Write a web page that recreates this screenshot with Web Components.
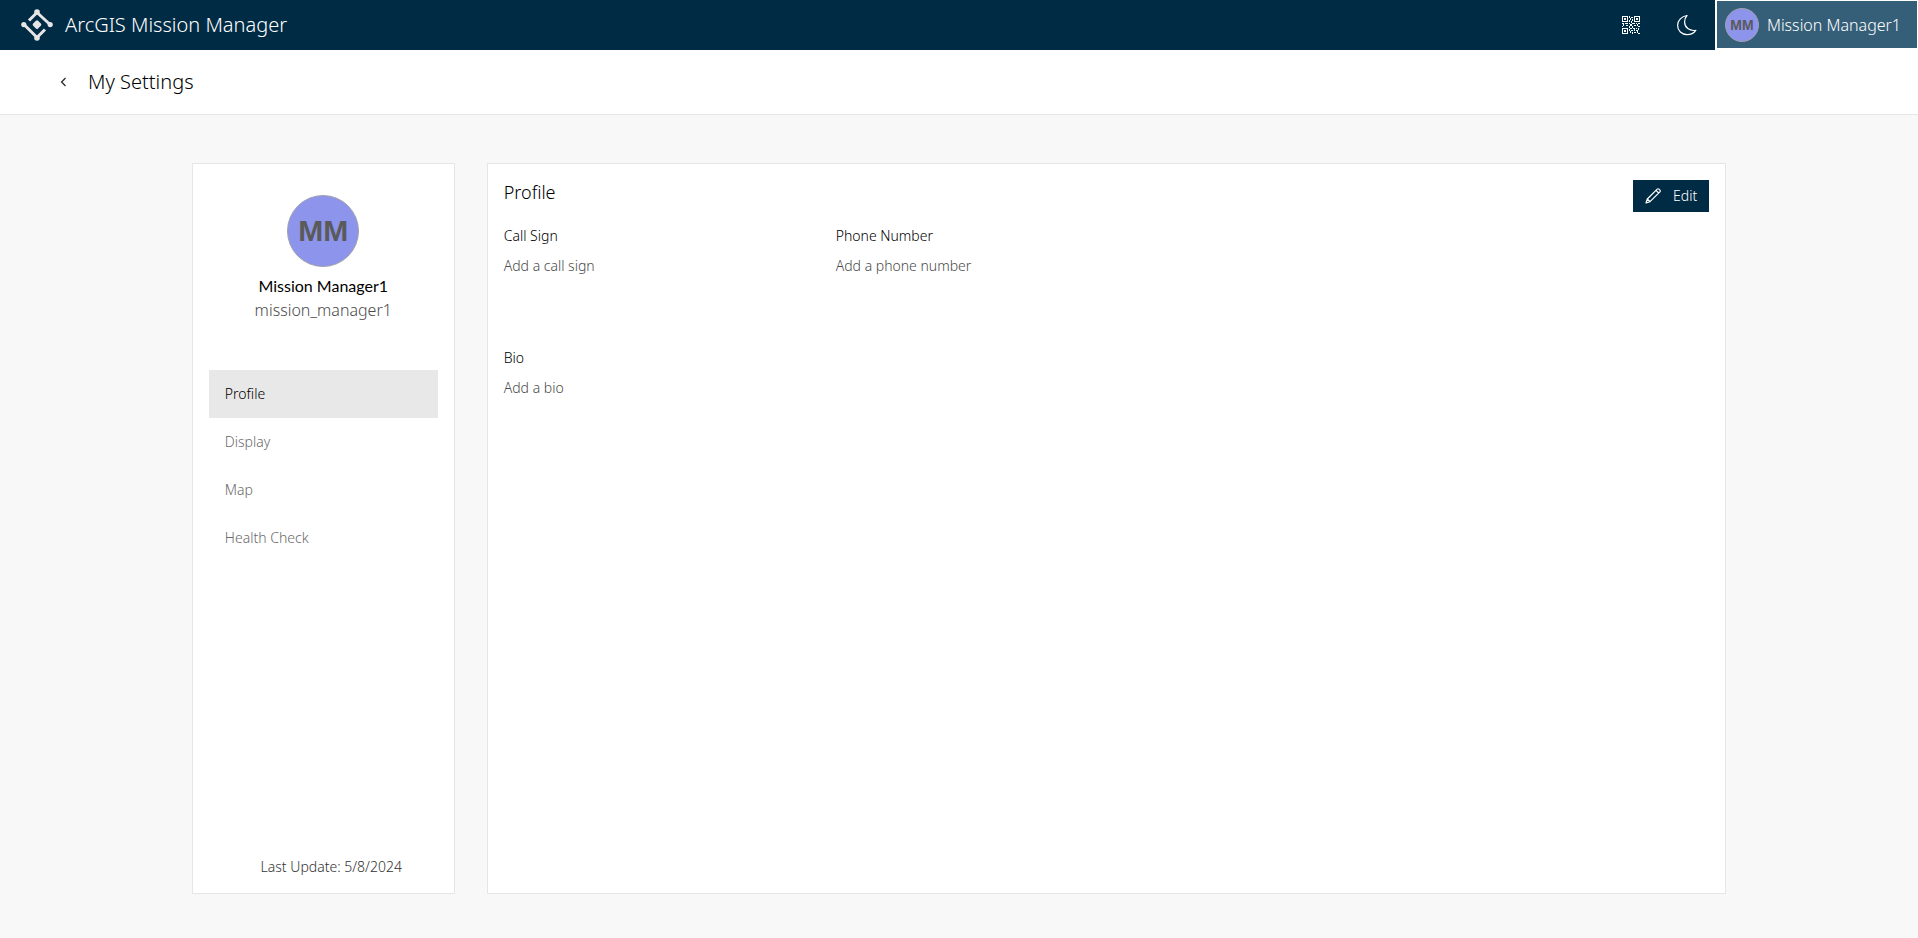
<!DOCTYPE html>
<html lang="en">
<head>
    <meta charset="UTF-8">
    <meta name="viewport" content="width=device-width, initial-scale=1.0">
    <title>ArcGIS Mission Manager</title>
    <style>
        body {
            margin: 0;
            background: #f8f8f8;
            color: #000;
            font-family: "Noto Sans", "Open Sans", sans-serif;
            font-size: 14px;
            font-weight: 300;
            line-height: 24px;
        }
    </style>
</head>
<body>
<mission-app></mission-app>

<script>
class UserAvatar extends HTMLElement {

    constructor() {
        super()
        this.shadowDOM = this.attachShadow({mode : "open"})
    }

    connectedCallback() {
        this.render()
    }

    render() {
        this.shadowDOM.innerHTML = `
            <style>
            :host {
                display: flex;
                align-items: center;
                justify-content: center;
                box-sizing: border-box;
                flex: none;
                width: var(--avatar-size, 34px);
                height: var(--avatar-size, 34px);
                border: 1px solid #a0a0ac;
                border-radius: 50%;
                background: #8c94eb;
                color: #5a5a5a;
                font: bold var(--avatar-text, 14px) "Liberation Sans", Arial, sans-serif;
            }
            </style>
            <slot></slot>
        `
    }

}
customElements.define("user-avatar", UserAvatar)

class AppHeader extends HTMLElement {

    constructor() {
        super()
        this.shadowDOM = this.attachShadow({mode : "open"})
    }

    connectedCallback() {
        this.render()
    }

    render() {
        this.shadowDOM.innerHTML = `
            <style>
            :host {
                display: flex;
                align-items: center;
                height: 50px;
                background: #002b45;
                color: #fff;
            }
            svg {
                display: block;
            }
            .brand {
                display: flex;
                align-items: center;
                gap: 12px;
                margin-right: auto;
                padding-left: 21px;
                color: inherit;
                font-size: 20px;
                text-decoration: none;
            }
            button {
                padding: 0;
                border: 0;
                background: none;
                color: inherit;
                font: inherit;
                cursor: pointer;
            }
            .tool {
                display: flex;
                align-items: center;
                justify-content: center;
                width: 56px;
                height: 50px;
            }
            .user {
                display: flex;
                align-items: center;
                gap: 8px;
                height: 50px;
                padding: 0 16px 0 8px;
                border: solid #fff;
                border-width: 1px 1px 2px 2px;
                background: #355e78;
                font-size: 16px;
            }
            </style>

            <a class="brand" href="#home">
                <svg width="32" height="32" viewBox="0 0 32 32" fill="none" stroke="#e6e6e6" stroke-width="3" aria-hidden="true">
                    <path d="M8 11.5 16 3.5 29 15.5M3 15.5 16 28.5 24 20.5"/>
                    <g fill="#e6e6e6" stroke="none">
                        <circle cx="16" cy="3" r="2.8"/>
                        <circle cx="29.2" cy="15.6" r="2.6"/>
                        <circle cx="2.8" cy="15.6" r="2.6"/>
                        <circle cx="16" cy="29" r="2.8"/>
                    </g>
                    <path d="M16 12.8 18.8 15.6 16 18.4 13.2 15.6z" fill="#e6e6e6" stroke-linejoin="round"/>
                </svg>
                <span>ArcGIS Mission Manager</span>
            </a>
            <button class="tool" type="button" aria-label="QR code">
                <svg width="18" height="18" viewBox="0 0 18 18" fill="#fff" shape-rendering="crispEdges">
                    <path fill-rule="evenodd" d="M0 0h6v6H0zM1 1v4h4V1zM12 0h6v6h-6zM13 1v4h4V1zM0 12h6v6H0zM1 13v4h4v-4z"/>
                    <path d="M2 2h2v2H2zM14 2h2v2h-2zM2 14h2v2H2z"/>
                    <path d="M7 0h1v2H7zM9 1h2v1H9zM8 2h1v2H8zM10 3h1v2h-1zM7 4h1v2H7zM9 5h1v2H9zM0 7h2v1H0zM3 7h3v1H3zM7 7h1v1H7zM10 7h3v1h-3zM14 7h1v1h-1zM16 7h2v1h-2zM1 8h1v2H1zM4 9h2v1H4zM8 8h2v2H8zM12 9h2v1h-2zM15 8h1v2h-1zM0 10h1v1H0zM7 10h1v2H7zM10 10h1v2h-1zM16 10h2v1h-2zM8 12h2v1H8zM11 12h2v1h-2zM14 12h1v1h-1zM16 12h1v2h-1zM7 13h1v2H7zM9 14h2v1H9zM12 13h1v2h-1zM14 14h2v1h-2zM8 15h1v2H8zM10 16h1v2h-1zM12 16h2v1h-2zM15 15h1v2h-1zM16 17h2v1h-2z"/>
                </svg>
            </button>
            <button class="tool" type="button" aria-label="Dark theme">
                <svg width="24" height="24" viewBox="0 0 24 24" fill="none" stroke="#fff" stroke-width="1.200" stroke-linejoin="round">
                    <path d="M12 2.5C6.700 3.200 2.600 7.300 2.600 12.400c0 5.200 4.200 9.200 9.500 9.200 3.700 0 6.900-1.600 8.700-4.300-6.400 1.100-11.200-2.900-11.200-8.300 0-2.500.8-4.800 2.400-6.500z"/>
                </svg>
            </button>
            <button class="user" type="button">
                <user-avatar>MM</user-avatar>
                <span>Mission Manager1</span>
            </button>
        `
    }

}
customElements.define("app-header", AppHeader)

class PageTitle extends HTMLElement {

    constructor() {
        super()
        this.shadowDOM = this.attachShadow({mode : "open"})
    }

    connectedCallback() {
        this.render()
    }

    render() {
        this.shadowDOM.innerHTML = `
            <style>
            :host {
                display: flex;
                align-items: center;
                gap: 16px;
                height: 64px;
                padding: 0 56px;
                border-bottom: 1px solid #e6e6e6;
                background: #fff;
            }
            a {
                color: #323232;
            }
            svg {
                display: block;
            }
            h1 {
                margin: 0;
                font-size: 20px;
                font-weight: inherit;
            }
            </style>

            <a href="#back" aria-label="Back">
                <svg width="16" height="16" viewBox="0 0 16 16" fill="none" stroke="currentColor" stroke-width="1.4">
                    <path d="M9.500 4 5.600 8l3.900 4"/>
                </svg>
            </a>
            <h1><slot></slot></h1>
        `
    }

}
customElements.define("page-title", PageTitle)

class SettingsMenu extends HTMLElement {

    constructor() {
        super()
        this.shadowDOM = this.attachShadow({mode : "open"})
    }

    connectedCallback() {
        this.render()
    }

    render() {
        this.shadowDOM.innerHTML = `
            <style>
            :host {
                display: flex;
                flex-direction: column;
                align-items: center;
                box-sizing: border-box;
                padding: 31px 16px 14px;
                border: 1px solid #e6e6e6;
                background: #fff;
            }
            user-avatar {
                --avatar-size: 72px;
                --avatar-text: 30px;
                margin-bottom: 7px;
            }
            .name {
                font-family: Lato, sans-serif;
                font-size: 16px;
                font-weight: 400;
            }
            .username {
                font-size: 16px;
                color: #4a4a4a;
            }
            nav {
                align-self: stretch;
                margin-top: 48px;
            }
            nav a {
                display: block;
                padding: 12px 16px;
                color: #6a6a6a;
                text-decoration: none;
            }
            nav a[aria-current] {
                background: #e8e8e8;
                color: #000;
            }
            .updated {
                margin-top: auto;
                padding-left: 16px;
                color: #323232;
            }
            </style>

            <user-avatar>MM</user-avatar>
            <div class="name">Mission Manager1</div>
            <div class="username">mission_manager1</div>
            <nav>
                <a href="#profile" aria-current="page">Profile</a>
                <a href="#display">Display</a>
                <a href="#map">Map</a>
                <a href="#health">Health Check</a>
            </nav>
            <div class="updated">Last Update: 5/8/2024</div>
        `
    }

}
customElements.define("settings-menu", SettingsMenu)

class ProfileField extends HTMLElement {

    constructor() {
        super()
        this.shadowDOM = this.attachShadow({mode : "open"})
    }

    connectedCallback() {
        this.render()
    }

    render() {
        this.shadowDOM.innerHTML = `
            <style>
            :host {
                display: flex;
                flex-direction: column;
                gap: 6px;
            }
            .value {
                color: #4a4a4a;
            }
            </style>

            <div class="label">${this.getAttribute("label")}</div>
            <div class="value"><slot></slot></div>
        `
    }

}
customElements.define("profile-field", ProfileField)

class ProfilePanel extends HTMLElement {

    constructor() {
        super()
        this.shadowDOM = this.attachShadow({mode : "open"})
    }

    connectedCallback() {
        this.render()
    }

    render() {
        this.shadowDOM.innerHTML = `
            <style>
            :host {
                display: block;
                box-sizing: border-box;
                padding: 16px;
                border: 1px solid #e6e6e6;
                background: #fff;
            }
            header {
                display: flex;
                justify-content: space-between;
                align-items: flex-start;
                margin-bottom: 12px;
            }
            h2 {
                margin: 0;
                font-size: 18px;
                font-weight: inherit;
            }
            button {
                display: flex;
                align-items: center;
                gap: 12px;
                height: 32px;
                padding: 0 12px;
                border: 0;
                background: #002b45;
                color: #fff;
                font: inherit;
                cursor: pointer;
            }
            .fields {
                display: grid;
                grid-template-columns: repeat(auto-fill, 300px);
                gap: 68px 32px;
            }
            .wide {
                grid-column: 1 / -1;
            }
            </style>

            <header>
                <h2>Profile</h2>
                <button type="button">
                    <svg width="16" height="16" viewBox="0 0 16 16" fill="none" stroke="#fff" stroke-width="1.200" stroke-linejoin="round" aria-hidden="true">
                        <path d="M1 15 2.300 11 12.200 1.100a1.200 1.200 0 0 1 1.700 0l1 1a1.200 1.200 0 0 1 0 1.700L5 13.700zM2.300 11 5 13.700M11 2.300 13.700 5"/>
                    </svg>
                    <span>Edit</span>
                </button>
            </header>
            <div class="fields">
                <profile-field label="Call Sign">Add a call sign</profile-field>
                <profile-field label="Phone Number">Add a phone number</profile-field>
                <profile-field class="wide" label="Bio">Add a bio</profile-field>
            </div>
        `
    }

}
customElements.define("profile-panel", ProfilePanel)

class MissionApp extends HTMLElement {

    constructor() {
        super()
        this.shadowDOM = this.attachShadow({mode : "open"})
    }

    connectedCallback() {
        this.render()
    }

    render() {
        this.shadowDOM.innerHTML = `
            <style>
            :host {
                display: flex;
                flex-direction: column;
                min-height: 100vh;
            }
            main {
                flex: 1;
                display: grid;
                grid-template-columns: 7fr 33fr;
                gap: 32px;
                padding: 48px 10% 44px;
            }
            </style>

            <app-header></app-header>
            <page-title>My Settings</page-title>
            <main>
                <settings-menu></settings-menu>
                <profile-panel></profile-panel>
            </main>
        `
    }

}
customElements.define("mission-app", MissionApp)
</script>
</body>
</html>
